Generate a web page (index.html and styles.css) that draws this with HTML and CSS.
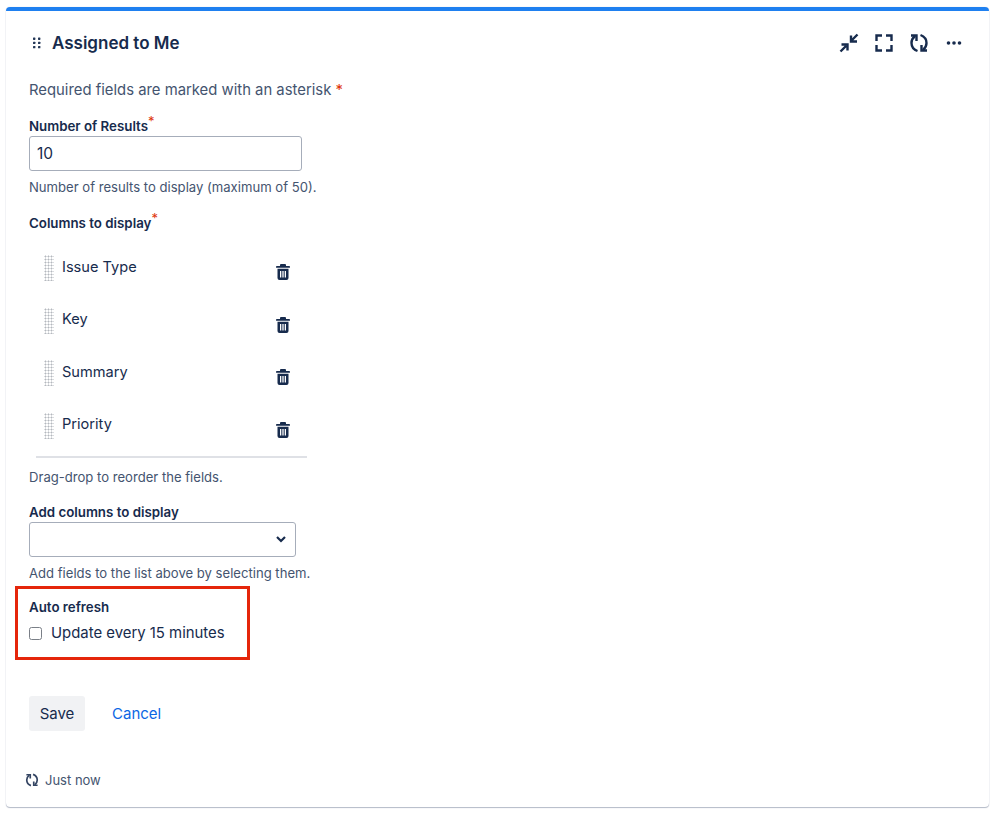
FILE: index.html
```html
<!DOCTYPE html>
<html lang="en">
<head>
<meta charset="utf-8">
<title>Assigned to Me</title>
<link rel="stylesheet" href="styles.css">
</head>
<body>
<section class="card">
  <header class="head">
    <div class="head-left">
      <svg class="grip" width="8" height="12" viewBox="0 0 8 12"><g fill="#253858"><rect x="0" y="0.5" width="2.4" height="2.4" rx=".6"/><rect x="5" y="0.5" width="2.4" height="2.4" rx=".6"/><rect x="0" y="4.7" width="2.4" height="2.4" rx=".6"/><rect x="5" y="4.7" width="2.4" height="2.4" rx=".6"/><rect x="0" y="8.9" width="2.4" height="2.4" rx=".6"/><rect x="5" y="8.9" width="2.4" height="2.4" rx=".6"/></g></svg>
      <h1 class="title">Assigned to Me</h1>
    </div>
    <div class="tools">
      <svg width="20" height="20" viewBox="0 0 20 20" fill="none" stroke="#172b4d" stroke-width="2.4"><path d="M18.500 1.500l-5.500 5.500M12 2.500v6h6"/><path d="M1.500 18.500l5.500-5.500M2.500 11.500h6v6"/></svg>
      <svg width="20" height="20" viewBox="0 0 20 20" fill="none" stroke="#172b4d" stroke-width="2.4"><path d="M8 2.500H2.500V8M12 2.500h5.500V8M2.500 12v5.500H8M17.500 12v5.500H12"/></svg>
      <svg width="20" height="20" viewBox="0 0 20 20" fill="none" stroke="#172b4d" stroke-width="2.4"><path d="M8.500 18C4.500 16.500 2.500 13.500 2.500 10 2.500 7.500 3.500 5 6 3"/><path d="M2 2.500h5.500V8"/><path d="M11.500 2C15.500 3.500 17.500 6.500 17.500 10c0 2.500-1 5-3.500 7"/><path d="M18 17.500h-5.500V12"/></svg>
      <svg width="20" height="20" viewBox="0 0 20 20" fill="#172b4d"><circle cx="4.500" cy="10" r="1.800"/><circle cx="10" cy="10" r="1.800"/><circle cx="15.500" cy="10" r="1.800"/></svg>
    </div>
  </header>

  <form class="form">
    <p class="required-note">Required fields are marked with an asterisk <span class="star">*</span></p>

    <div class="field field-results">
      <label class="label">Number of Results<sup class="req">*</sup></label>
      <div class="input">10</div>
      <p class="hint">Number of results to display (maximum of 50).</p>
    </div>

    <div class="field field-columns">
      <label class="label">Columns to display<sup class="req">*</sup></label>
      <ul class="columns">
        <li class="col-row"><span class="dots"></span><span class="col-name">Issue Type</span><svg class="trash" width="14" height="16" viewBox="0 0 14 16"><path fill="#172b4d" d="M5 0h4a1 1 0 0 1 1 1v1h3.200a.8.8 0 0 1 0 1.800H.8A.8.800 0 0 1 .8 2H4V1a1 1 0 0 1 1-1zM1.500 4.800h11v9.200a2 2 0 0 1-2 2h-7a2 2 0 0 1-2-2zM4 7v6.500h1.300V7zm2.350 0v6.500h1.300V7zm2.350 0v6.500H10V7z" fill-rule="evenodd"/></svg></li>
        <li class="col-row"><span class="dots"></span><span class="col-name">Key</span><svg class="trash" width="14" height="16" viewBox="0 0 14 16"><path fill="#172b4d" d="M5 0h4a1 1 0 0 1 1 1v1h3.200a.8.8 0 0 1 0 1.800H.8A.8.800 0 0 1 .8 2H4V1a1 1 0 0 1 1-1zM1.500 4.800h11v9.200a2 2 0 0 1-2 2h-7a2 2 0 0 1-2-2zM4 7v6.500h1.300V7zm2.350 0v6.500h1.300V7zm2.350 0v6.500H10V7z" fill-rule="evenodd"/></svg></li>
        <li class="col-row"><span class="dots"></span><span class="col-name">Summary</span><svg class="trash" width="14" height="16" viewBox="0 0 14 16"><path fill="#172b4d" d="M5 0h4a1 1 0 0 1 1 1v1h3.200a.8.8 0 0 1 0 1.800H.8A.8.800 0 0 1 .8 2H4V1a1 1 0 0 1 1-1zM1.500 4.800h11v9.200a2 2 0 0 1-2 2h-7a2 2 0 0 1-2-2zM4 7v6.500h1.300V7zm2.350 0v6.500h1.300V7zm2.350 0v6.500H10V7z" fill-rule="evenodd"/></svg></li>
        <li class="col-row"><span class="dots"></span><span class="col-name">Priority</span><svg class="trash" width="14" height="16" viewBox="0 0 14 16"><path fill="#172b4d" d="M5 0h4a1 1 0 0 1 1 1v1h3.200a.8.8 0 0 1 0 1.800H.8A.8.800 0 0 1 .8 2H4V1a1 1 0 0 1 1-1zM1.500 4.800h11v9.200a2 2 0 0 1-2 2h-7a2 2 0 0 1-2-2zM4 7v6.500h1.300V7zm2.350 0v6.500h1.300V7zm2.350 0v6.500H10V7z" fill-rule="evenodd"/></svg></li>
      </ul>
      <p class="hint">Drag-drop to reorder the fields.</p>
    </div>

    <div class="field field-add">
      <label class="label">Add columns to display</label>
      <div class="select"><svg width="10" height="7" viewBox="0 0 10 7" fill="none" stroke="#172b4d" stroke-width="2.2"><path d="M1 1l4 4 4-4"/></svg></div>
      <p class="hint">Add fields to the list above by selecting them.</p>
    </div>

    <div class="refresh">
      <label class="label">Auto refresh</label>
      <div class="check-row"><span class="check"></span><span class="check-text">Update every 15 minutes</span></div>
    </div>

    <div class="actions">
      <button class="save" type="button">Save</button>
      <a class="cancel" href="#">Cancel</a>
    </div>
  </form>

  <footer class="foot">
    <svg width="14" height="14" viewBox="0 0 20 20" fill="none" stroke="#344563" stroke-width="2.4"><path d="M8.500 18C4.500 16.500 2.500 13.500 2.500 10 2.500 7.500 3.500 5 6 3"/><path d="M2 2.500h5.500V8"/><path d="M11.500 2C15.500 3.500 17.500 6.500 17.500 10c0 2.500-1 5-3.500 7"/><path d="M18 17.500h-5.500V12"/></svg>
    <span>Just now</span>
  </footer>
</section>
</body>
</html>
```
FILE: styles.css
```css
* { box-sizing: border-box; }
html, body { margin: 0; height: 100%; background: #fff; }
body {
  padding: 7px 10px 6px 6px;
  font-family: Inter, "Liberation Sans", sans-serif;
  color: #172b4d;
  overflow: hidden;
}
.card {
  height: 800px;
  display: flex;
  flex-direction: column;
  border-top: 4px solid #1f80f0;
  border-radius: 4px;
  box-shadow: 0 1px 1px #b3bac7, 0 0 1px #c4c9d4;
}
.head {
  height: 64px;
  display: flex;
  align-items: center;
  justify-content: space-between;
  padding: 0 25px 0 27px;
}
.head-left { display: flex; align-items: center; gap: 11px; }
.title { margin: 0; font-size: 17px; font-weight: 600; line-height: 24px; }
.tools { display: flex; gap: 15px; align-items: center; }
.form { padding: 0 0 0 23px; flex: 1; display: flex; flex-direction: column; }
.required-note { margin: 5px 0 0; font-size: 14.85px; line-height: 20px; color: #44546f; }
.star { color: #de350b; }
.label { display: block; font-size: 13.3px; font-weight: 600; line-height: 18px; color: #172b4d; }
.req { color: #de350b; font-size: 13px; line-height: 0; vertical-align: 5px; font-weight: 400; }
.field-results { margin-top: 17px; }
.input {
  width: 273px; height: 35px; margin-top: 1px;
  border: 1px solid #a6adba; border-radius: 3px;
  padding: 0 7px; font-size: 15.5px; line-height: 33px; color: #172b4d;
}
.hint { margin: 8px 0 0; font-size: 13.1px; line-height: 17px; color: #44546f; }
.field-columns { margin-top: 18px; }
.columns { list-style: none; margin: 17px 0 0 7px; padding: 0; width: 271px; border-bottom: 2px solid #dfe1e6; }
.col-row { height: 52.5px; display: flex; padding-left: 8px; position: relative; }
.col-row:last-child { height: 49.5px; }
.dots {
  width: 10px; height: 26px; margin-top: 6px;
  background-image: radial-gradient(circle, #b4b8be 0.9px, transparent 1.1px);
  background-size: 3px 3px;
}
.col-name { margin: 7.5px 0 0 8px; font-size: 14.6px; line-height: 20px; color: #172b4d; }
.trash { position: absolute; left: 240px; top: 15px; }
.field-columns .hint { margin-top: 11px; }
.field-add { margin-top: 17px; }
.select {
  width: 267px; height: 35px; margin-top: 1px;
  border: 1px solid #a6adba; border-radius: 3px;
  display: flex; align-items: center; justify-content: flex-end; padding-right: 9px;
}
.refresh { position: relative; margin-top: 16px; }
.refresh::before {
  content: ""; box-sizing: border-box; position: absolute; left: -14px; top: -12px; width: 235px; height: 74px;
  border: 3px solid #e5260b;
}
.check-row { display: flex; align-items: center; gap: 9px; margin-top: 7px; }
.check { width: 13px; height: 13px; border: 1.5px solid #7a7f87; border-radius: 2.5px; }
.check-text { font-size: 14.9px; line-height: 20px; color: #172b4d; }
.actions { display: flex; align-items: center; gap: 27px; margin-top: 53px; }
.save {
  width: 56px; height: 35px; border: 0; border-radius: 3px; background: #f1f2f4;
  font: 400 15px Inter, "Liberation Sans", sans-serif; color: #172b4d; padding: 0;
}
.cancel { color: #0c66e4; font-size: 15px; text-decoration: none; }
.foot {
  height: 42px; margin-bottom: 6px;
  display: flex; align-items: center; gap: 6px; padding-left: 19px;
  font-size: 13px; color: #44546f;
}
```
